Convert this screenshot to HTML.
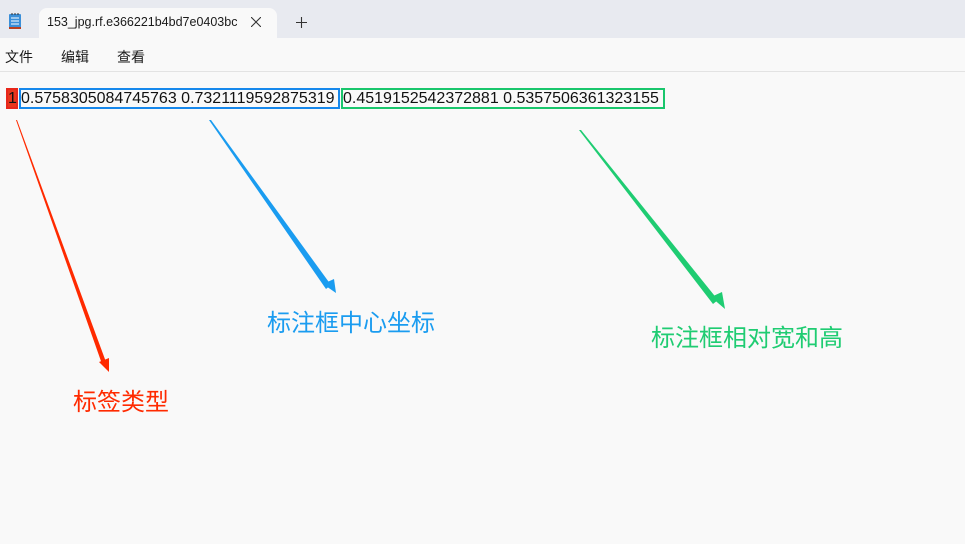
<!DOCTYPE html>
<html><head><meta charset="utf-8"><style>
*{margin:0;padding:0;box-sizing:border-box}
body{width:965px;height:544px;background:#f9f9f9;font-family:"Liberation Sans","Noto Sans CJK SC",sans-serif;position:relative;overflow:hidden}
.tabbar{position:absolute;left:0;top:0;width:965px;height:38px;background:#e8eaf0}
.tab{position:absolute;left:39px;top:8px;width:238px;height:31px;background:#f9f9f9;border-radius:8px 8px 0 0}
.tab span{position:absolute;left:8px;top:7px;font-size:12.5px;color:#1a1a1a;white-space:nowrap;width:190px;overflow:hidden}
.menu{position:absolute;top:38px;left:0;width:965px;height:34px;border-bottom:1px solid #e3e3e3}
.menu span{position:absolute;top:9px;font-size:14px;color:#1a1a1a}
.t{position:absolute;top:89px;font-size:16px;line-height:19px;color:#111;white-space:nowrap}
.box{position:absolute;border:2px solid}
.lbl{position:absolute;font-size:24px;white-space:nowrap}
</style></head><body>
<div class="tabbar">
 <svg style="position:absolute;left:8px;top:12px" width="14" height="18" viewBox="0 0 14 18"><rect x="1" y="2" width="12" height="15" rx="1" fill="#3b8fd8"/><rect x="1" y="15" width="12" height="2" fill="#b94020"/><path d="M3 6h8M3 9h8M3 12h8" stroke="#fff" stroke-width="1"/><path d="M4 1v2M7 1v2M10 1v2" stroke="#333" stroke-width="1"/></svg>
 <div class="tab"><span>153_jpg.rf.e366221b4bd7e0403bc6</span>
  <svg style="position:absolute;left:212px;top:9px" width="10" height="10"><path d="M0 0L10 10M10 0L0 10" stroke="#333" stroke-width="1.1"/></svg></div>
 <svg style="position:absolute;left:296px;top:17px" width="11" height="11"><path d="M5.5 0v11M0 5.5h11" stroke="#333" stroke-width="1.1"/></svg>
</div>
<div class="menu"><span style="left:5px">文件</span><span style="left:61px">编辑</span><span style="left:117px">查看</span></div>
<div class="box" style="left:6px;top:88px;width:12px;height:21px;background:#e8361c;border-color:#e8261a"></div>
<div class="box" style="left:19px;top:88px;width:321px;height:21px;border-color:#1688ec"></div>
<div class="box" style="left:341px;top:88px;width:324px;height:21px;border-color:#19c66c"></div>
<div class="t" style="left:8px">1</div>
<div class="t" style="left:21px">0.5758305084745763 0.7321119592875319</div>
<div class="t" style="left:343px">0.4519152542372881 0.5357506361323155</div>
<svg style="position:absolute;left:0;top:0" width="965" height="544">
 <polygon points="16,120 17,120 106,362 102,364" fill="#ff2a00"/>
 <polygon points="99,362 109,358 109,372" fill="#ff2a00"/>
 <polygon points="209,120 211,120 331,285 326,289" fill="#1a9cf0"/>
 <polygon points="323,284 334,279 336,293" fill="#1a9cf0"/>
 <polygon points="579,130 581,130 718,300 713,304" fill="#1fcc72"/>
 <polygon points="711,297 722,292 725,309" fill="#1fcc72"/>
</svg>
<div class="lbl" style="left:73px;top:382px;color:#ff2a00">标签类型</div>
<div class="lbl" style="left:267px;top:303px;color:#1a9cf0">标注框中心坐标</div>
<div class="lbl" style="left:651px;top:318px;color:#1fcc72">标注框相对宽和高</div>
</body></html>
